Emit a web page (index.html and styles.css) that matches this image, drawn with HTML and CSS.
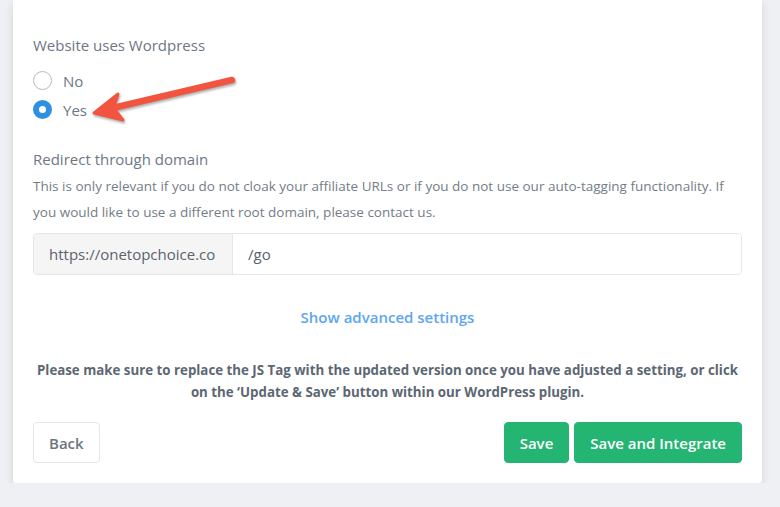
FILE: index.html
```html
<!DOCTYPE html>
<html lang="en">
<head>
    <meta charset="UTF-8">
    <meta name="viewport" content="width=device-width, initial-scale=1.0">
    <title>Integration settings</title>
    <link rel="stylesheet" href="styles.css">
</head>
<body>
    <div class="card">
        <!-- WordPress -->
        <div class="field">
            <div class="label">Website uses Wordpress</div>
            <div class="radios">
                <label class="radio"><span class="dot"></span>No</label>
                <label class="radio checked"><span class="dot"></span>Yes</label>
                <svg class="arrow" width="150" height="56" viewBox="0 0 150 56">
                    <path d="M141 12 L26 39" stroke="#f2553f" stroke-width="6.5" stroke-linecap="round" fill="none"/>
                    <path d="M3 45 L27 26 L22.5 40 L32 52 Z" fill="#f2553f" stroke="#f2553f" stroke-width="3" stroke-linejoin="round"/>
                </svg>
            </div>
        </div>

        <!-- Домен -->
        <div class="field">
            <div class="label">Redirect through domain</div>
            <p class="help">This is only relevant if you do not cloak your affiliate URLs or if you do not use our auto-tagging functionality. If you would like to use a different root domain, please contact us.</p>
            <div class="input-group">
                <span class="prepend">https://onetopchoice.co</span>
                <input type="text" value="/go">
            </div>
        </div>

        <div class="advanced"><a href="#">Show advanced settings</a></div>

        <p class="notice">Please make sure to replace the JS Tag with the updated version once you have adjusted a setting, or click on the ‘Update &amp; Save’ button within our WordPress plugin.</p>

        <div class="actions">
            <button class="btn btn-light">Back</button>
            <div class="right">
                <button class="btn btn-green">Save</button>
                <button class="btn btn-green">Save and Integrate</button>
            </div>
        </div>
    </div>
</body>
</html>
```

FILE: styles.css
```css
body {
    margin: 0;
    font-family: "Open Sans", "Noto Sans", sans-serif;
    background: #eef0f3;
    color: #6b7681;
}

.card {
    width: 749px;
    margin-left: 13px;
    background: #fff;
    padding: 34px 20px 20px 20px;
    box-sizing: border-box;
    border-radius: 0 0 3px 3px;
    box-shadow: 0 4px 8px rgba(0, 0, 0, 0.12);
}

.label {
    font-size: 15px;
    line-height: 22px;
    color: #6c7884;
}

.radios {
    position: relative;
    margin-top: 10px;
}

.radio {
    display: flex;
    align-items: center;
    height: 29px;
    font-size: 15px;
    color: #6c7884;
}

.dot {
    width: 17px;
    height: 17px;
    border: 1px solid #b5bcc4;
    border-radius: 50%;
    margin-right: 11px;
    box-sizing: content-box;
}

.radio.checked .dot {
    border: 6px solid #2f8fe0;
    width: 7px;
    height: 7px;
    background: #fff;
}

.arrow {
    position: absolute;
    left: 58px;
    top: 2px;
    filter: drop-shadow(1px 2px 1px rgba(0, 0, 0, 0.3));
}

.field + .field {
    margin-top: 24px;
}

.help {
    margin: 3px 0 0 0;
    font-size: 13.5px;
    line-height: 26px;
    color: #737d87;
}

.input-group {
    display: flex;
    margin-top: 8px;
    height: 42px;
    border: 1px solid #e3e6ea;
    border-radius: 4px;
    box-sizing: border-box;
    overflow: hidden;
}

.prepend {
    display: flex;
    align-items: center;
    width: 199px;
    padding-left: 15px;
    box-sizing: border-box;
    background: #f5f5f5;
    border-right: 1px solid #e3e6ea;
    font-size: 15px;
    color: #59636d;
}

.input-group input {
    flex: 1;
    border: none;
    outline: none;
    padding: 0 15px;
    font-family: inherit;
    font-size: 15px;
    color: #59636d;
}

.advanced {
    margin-top: 31px;
    text-align: center;
    font-size: 15px;
    line-height: 22px;
}

.advanced a {
    color: #5da6f2;
    font-weight: 600;
    text-decoration: none;
}

.notice {
    margin: 31px 0 0 0;
    text-align: center;
    font-size: 13.3px;
    line-height: 22px;
    font-weight: 700;
    color: #5c6773;
}

.actions {
    display: flex;
    justify-content: space-between;
    margin-top: 19px;
}

.right {
    display: flex;
    gap: 5px;
}

.btn {
    height: 41px;
    padding: 0 15px;
    font-family: inherit;
    font-size: 15px;
    font-weight: 600;
    border-radius: 4px;
    cursor: pointer;
}

.btn-light {
    background: #fff;
    border: 1px solid #e3e6ea;
    color: #6b7681;
}

.btn-green {
    background: #23b571;
    border: 1px solid #23b571;
    color: #fff;
}
```
